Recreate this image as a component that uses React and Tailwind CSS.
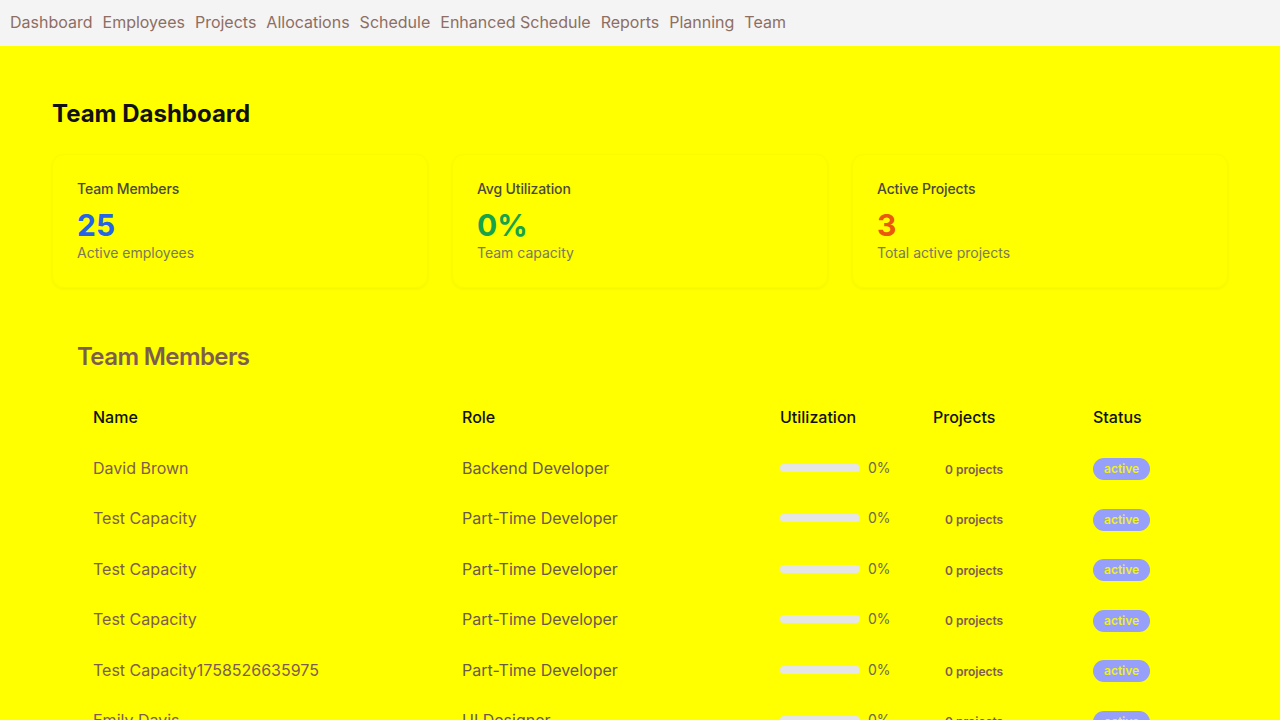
import React from "react";

const NAV = [
  "Dashboard",
  "Employees",
  "Projects",
  "Allocations",
  "Schedule",
  "Enhanced Schedule",
  "Reports",
  "Planning",
  "Team",
];

const STATS = [
  { label: "Team Members", value: "25", sub: "Active employees", color: "text-[#2563eb]" },
  { label: "Avg Utilization", value: "0%", sub: "Team capacity", color: "text-[#16a34a]" },
  { label: "Active Projects", value: "3", sub: "Total active projects", color: "text-[#ea580c]" },
];

const MEMBERS = [
  { name: "David Brown", role: "Backend Developer" },
  { name: "Test Capacity", role: "Part-Time Developer" },
  { name: "Test Capacity", role: "Part-Time Developer" },
  { name: "Test Capacity", role: "Part-Time Developer" },
  { name: "Test Capacity1758526635975", role: "Part-Time Developer" },
  { name: "Emily Davis", role: "UI Designer" },
];

const App = () => {
  return (
    <div
      className="min-h-screen w-full bg-[#ffff00]"
      style={{ fontFamily: "Inter, 'Noto Sans', sans-serif" }}
    >
      {/* Top nav */}
      <nav className="h-[46px] bg-[#f4f4f4] flex items-center gap-[10px] px-[10px] pb-[2px]">
        {NAV.map((item) => (
          <span key={item} className="text-base text-[#8d6e63]">
            {item}
          </span>
        ))}
      </nav>

      <div className="px-[52px] pt-[52px]">
        <h1 className="text-2xl font-bold text-[#111111] leading-8">Team Dashboard</h1>

        {/* Stat cards */}
        <div className="grid grid-cols-3 gap-6 mt-[24px]">
          {STATS.map((s) => (
            <div
              key={s.label}
              className="rounded-xl border border-[#fbfb00] shadow-[0_1px_3px_rgba(0,0,0,0.05)] p-6"
            >
              <div className="text-sm font-medium text-[#4a4a3a] leading-5 tracking-[-0.01em]">
                {s.label}
              </div>
              <div className={`text-3xl font-bold leading-9 mt-2 ${s.color}`}>{s.value}</div>
              <div className="text-sm text-[#7a7a5a] leading-5">{s.sub}</div>
            </div>
          ))}
        </div>

        {/* Team members table */}
        <div className="mt-6 px-[25px] pt-[29px]">
          <h2 className="text-2xl font-semibold tracking-tight text-[#7d5e4e] leading-8">
            Team Members
          </h2>
          <table className="w-full mt-[19px] text-left border-collapse">
            <thead>
              <tr className="h-[50.5px]">
                <th className="w-[369px] px-4 font-medium text-base text-[#111111]">Name</th>
                <th className="w-[318px] px-4 font-medium text-base text-[#111111]">Role</th>
                <th className="w-[153px] px-4 font-medium text-base text-[#111111]">Utilization</th>
                <th className="w-[160px] px-4 font-medium text-base text-[#111111]">Projects</th>
                <th className="px-4 font-medium text-base text-[#111111]">Status</th>
              </tr>
            </thead>
            <tbody>
              {MEMBERS.map((m, i) => (
                <tr key={i} className="h-[50.5px]">
                  <td className="px-4 text-base text-[#7d5e4e]">{m.name}</td>
                  <td className="px-4 text-base text-[#6b5a4a]">{m.role}</td>
                  <td className="px-4">
                    <div className="flex items-center gap-2">
                      <div className="w-20 h-2 rounded-full bg-[#e6e6e6]" />
                      <span className="text-sm text-[#6b6b4a]">0%</span>
                    </div>
                  </td>
                  <td className="px-4">
                    <span className="px-3 text-xs font-semibold text-[#7d5e4e]">0 projects</span>
                  </td>
                  <td className="px-4">
                    <span className="inline-flex items-center h-[22px] px-[11px] rounded-full bg-[#969ffa] text-xs font-semibold text-[#f0f01a]">
                      active
                    </span>
                  </td>
                </tr>
              ))}
            </tbody>
          </table>
        </div>
      </div>
    </div>
  );
};

export default App;
